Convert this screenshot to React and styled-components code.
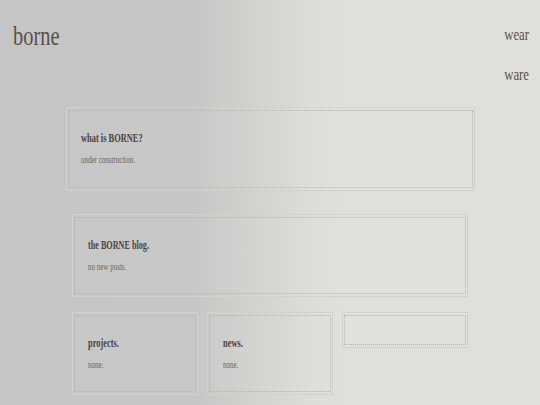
import React from 'react';
import styled, { createGlobalStyle } from 'styled-components';

const Global = createGlobalStyle`
  html, body {
    margin: 0;
    padding: 0;
  }
  body {
    width: 540px;
    height: 405px;
    overflow: hidden;
    font-family: "Liberation Serif", "Times New Roman", serif;
    background: linear-gradient(to right, #c5c5c5 0%, #c6c6c6 36%, #d3d3cf 48%, #dddcd7 57%, #e0e0db 63%, #e0e0db 100%);
  }
`;

const Page = styled.div`
  width: 540px;
  height: 405px;
`;

const Header = styled.header`
  display: flex;
  justify-content: space-between;
  align-items: flex-start;
  height: 107px;
  padding: 0 11px 0 13px;
  box-sizing: border-box;
`;

const Squeeze = styled.span`
  display: inline-block;
  white-space: nowrap;
  transform: scaleX(${props => props.k || 0.73});
  transform-origin: ${props => props.right ? 'right' : 'left'} center;
`;

const Logo = styled.div`
  font-size: 28px;
  line-height: 28px;
  color: #5a4f48;
  margin-top: 22px;
`;

const Nav = styled.nav`
  display: flex;
  flex-direction: column;
  align-items: flex-end;
  gap: 19px;
  margin-top: 24px;
`;

const NavLink = styled.a`
  font-size: 17.5px;
  line-height: 21px;
  color: #5a4f48;
  text-decoration: none;
`;

const Main = styled.main`
  display: flex;
  flex-direction: column;
`;

const Box = styled.section`
  box-sizing: border-box;
  margin-left: ${props => props.left || 72}px;
  width: ${props => props.w || 396}px;
  height: ${props => props.h || 83}px;
  margin-top: ${props => props.top || 0}px;
  border: 1px solid #d1d1cd;
  padding: 2px 1px 2px 1px;
  background: rgba(255, 255, 255, 0.04);
`;

const Inner = styled.div`
  box-sizing: border-box;
  height: 100%;
  border: 1px dotted #b2b2ae;
  padding: ${props => props.pad || '20px 12px 0 13px'};
`;

const Title = styled.h2`
  margin: 0;
  font-size: 12px;
  line-height: 14px;
  font-weight: bold;
  color: #4e433c;
`;

const Text = styled.p`
  margin: 9px 0 0;
  font-size: 10px;
  line-height: 12px;
  color: #6c645e;
`;

const Row = styled.div`
  display: grid;
  grid-template-columns: 126px 126px 126px;
  gap: 9px;
  margin-left: 72px;
  margin-top: 15px;
  align-items: start;
`;

const Cell = styled(Box)`
  margin: 0;
  width: auto;
`;

export default function App() {
  return (
    <Page>
      <Global />
      <Header>
        <Logo><Squeeze>borne</Squeeze></Logo>
        <Nav>
          <NavLink><Squeeze right>wear</Squeeze></NavLink>
          <NavLink><Squeeze right>ware</Squeeze></NavLink>
        </Nav>
      </Header>
      <Main>
        <Box left={66} w={409} h={84}>
          <Inner pad="20px 12px 0 12px">
            <Title><Squeeze k={0.7}>what is BORNE?</Squeeze></Title>
            <Text><Squeeze k={0.7}>under construction.</Squeeze></Text>
          </Inner>
        </Box>
        <Box top={23}>
          <Inner>
            <Title><Squeeze k={0.68}>the BORNE blog.</Squeeze></Title>
            <Text><Squeeze k={0.7}>no new posts.</Squeeze></Text>
          </Inner>
        </Box>
        <Row>
          <Cell h={83}>
            <Inner>
              <Title><Squeeze k={0.7}>projects.</Squeeze></Title>
              <Text><Squeeze k={0.7}>none.</Squeeze></Text>
            </Inner>
          </Cell>
          <Cell h={83}>
            <Inner>
              <Title><Squeeze k={0.7}>news.</Squeeze></Title>
              <Text><Squeeze k={0.7}>none.</Squeeze></Text>
            </Inner>
          </Cell>
          <Cell h={36}>
            <Inner />
          </Cell>
        </Row>
      </Main>
    </Page>
  );
}
